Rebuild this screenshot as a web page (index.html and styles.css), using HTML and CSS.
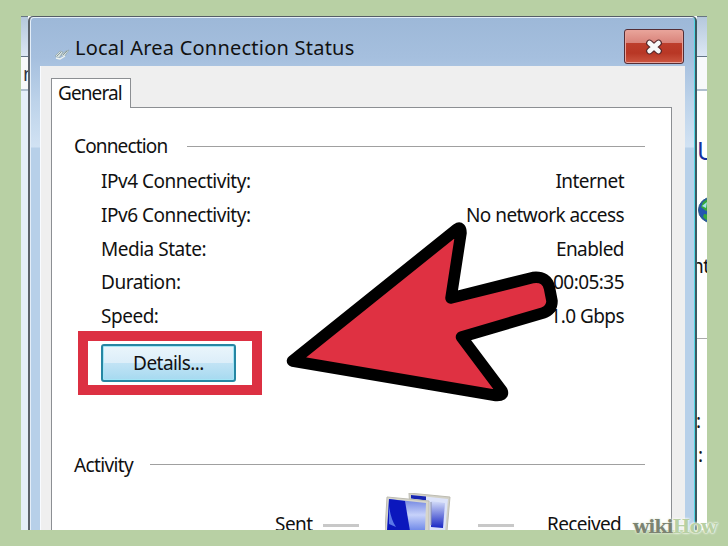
FILE: index.html
```html
<!DOCTYPE html>
<html lang="en">
<head>
<meta charset="utf-8">
<title>Local Area Connection Status</title>
<link rel="stylesheet" href="styles.css">
</head>
<body>
<main class="stage">
  <aside class="behind behind-left">
    <div class="glass"></div>
    <div class="address"><span>n</span></div>
    <div class="pane"></div>
  </aside>
  <section class="dialog">
    <header class="titlebar">
      <svg class="net-icon" width="16" height="12" viewBox="0 0 16 12"><path d="M1 8l5-5 3 1-4 6zM7 7l5-4 3-1-5 7z" fill="#d8e2df" stroke="#8fa4ab" stroke-width=".7"/><path d="M2 10l4 1 5-3" fill="none" stroke="#eef4f2" stroke-width="1.3"/><path d="M3 8l4-4M9 7l4-4" stroke="#74878c" stroke-width=".8"/></svg>
      <h1>Local Area Connection Status</h1>
      <button class="close" aria-label="Close"><svg width="20" height="18" viewBox="0 0 20 18"><path d="M5.500 5l9 8M14.500 5l-9 8" stroke="#55282b" stroke-width="6.800" stroke-linecap="round"/><path d="M5.500 5l9 8M14.500 5l-9 8" stroke="#f8f8f8" stroke-width="4.600" stroke-linecap="round"/></svg></button>
    </header>
    <div class="body">
      <div class="tabs"><div class="tab">General</div></div>
      <div class="panel">
        <h2 class="group connection"><span>Connection</span><i></i></h2>
        <dl>
          <div><dt>IPv4 Connectivity:</dt><dd>Internet</dd></div>
          <div><dt>IPv6 Connectivity:</dt><dd>No network access</dd></div>
          <div><dt>Media State:</dt><dd>Enabled</dd></div>
          <div><dt>Duration:</dt><dd>00:05:35</dd></div>
          <div><dt>Speed:</dt><dd>1.0 Gbps</dd></div>
        </dl>
        <div class="highlight"><button class="details">Details...</button></div>
        <h2 class="group activity"><span>Activity</span><i></i></h2>
        <div class="traffic">
          <span class="sent">Sent</span><i></i>
          <svg class="monitors" width="68" height="38" viewBox="0 0 68 38">
            <defs>
              <linearGradient id="screen" x2="0" y2="1"><stop stop-color="#6f83e0"/><stop offset=".5" stop-color="#c7d2fa"/><stop offset="1" stop-color="#6c86e8"/></linearGradient>
              <linearGradient id="rear" x2="0" y2="1"><stop stop-color="#d5def9"/><stop offset="1" stop-color="#1826c4"/></linearGradient>
            </defs>
            <path d="M24 0l41 4-3 34H26z" fill="#d2d1c7" stroke="#bdbcb2"/>
            <path d="M26 2l37 4-3 32H28z" fill="#dce3fa"/>
            <path d="M26 2l15 1.500v4l-15-2z" fill="#1726b2"/>
            <path d="M46 8l14 2-2 25-12-1z" fill="url(#rear)"/>
            <path d="M46 9v23" stroke="#8d92a8"/>
            <path d="M2 4l42 4v30H0z" fill="#d7d6cb" stroke="#bdbcb2"/>
            <path d="M4 6l37 4-1 28H2z" fill="url(#screen)"/>
            <path d="M4 6l16 2 5 30H2z" fill="#0b17bd"/>
            <path d="M4 13q2 14 7 21l-7-3z" fill="#5b78e8"/>
          </svg>
          <i></i><span class="received">Received</span>
        </div>
      </div>
    </div>
  </section>
  <aside class="behind behind-right">
    <div class="glass"></div>
    <div class="address"></div>
    <div class="pane">
      <span class="blue">U</span>
      <svg class="globe" width="26" height="26" viewBox="0 0 26 26"><circle cx="13" cy="13" r="12.500" fill="#2456b0" stroke="#315f86"/><path d="M5 5q5-4 8-4v10l-5 3-5-4zM6 17l7 1v7q-6-2-8-5z" fill="#37a83c"/><path d="M4 9l5-4-1 6z" fill="#a4e3ec"/></svg>
      <span class="nt">nt</span>
      <hr>
      <span class="colon one">:</span>
      <span class="colon two">:</span>
    </div>
  </aside>
</main>
<svg class="arrow" width="728" height="546" viewBox="0 0 728 546"><path d="M292.500 361L457 229Q461 226 461 233L451 298L533 277.500Q547 276 549.500 288L552 301Q552 310 543 313L461.500 337L502 391Q504 396 496 395.500Z" fill="#df3142" stroke="#000" stroke-width="11.500" stroke-linejoin="round"/></svg>
<div class="watermark"><span>wiki</span><b>How</b></div>
</body>
</html>
```

FILE: styles.css
```css
* { box-sizing: border-box; }
body {
  margin: 0;
  width: 728px;
  height: 546px;
  overflow: hidden;
  padding: 16px 21px;
  background: #b8d0a4;
  color: #111;
  font: 19px/24px "Noto Sans", sans-serif;
  letter-spacing: -.55px;
}
h1, h2, dl, dd { margin: 0; font: inherit; }
button { font: inherit; letter-spacing: inherit; color: inherit; padding: 0; }
.stage {
  display: flex;
  width: 686px;
  height: 514px;
  overflow: hidden;
  background: #fff;
}
.behind { overflow: hidden; border-top: 1px solid #687681; flex: none; }
.behind-left { width: 7px; }
.behind-right { width: 10px; }
.glass { height: 39px; background: linear-gradient(#b5c8dc, #dce7f4); }
.address { height: 35px; border-top: 1px solid #647587; border-bottom: 2px solid #afbfce; background: #f7f9fb; overflow: hidden; }
.address span { display: block; margin: 5px 0 0 2px; color: #334; }
.behind-left .pane { height: 440px; background: #e5eff9; }
.dialog {
  width: 669px;
  flex: none;
  border: 1px solid #555d66;
  border-left: 2px solid #5b626b;
  border-right: 2px solid #3b5a62;
  border-bottom: 0;
  border-radius: 5px 5px 0 0;
  background: linear-gradient(#9db8d8 0, #a5bfde 40px, #bdd3ea 85px, #d1e2f3 130px, #b7d0e9 131px, #b7d0e9);
  box-shadow: inset 1px 1px #e4eef8, inset -1px 0 #51d7e4;
  padding: 0 11px 0 10px;
}
.titlebar { display: flex; height: 49px; align-items: flex-start; }
.net-icon { margin: 31px 5px 0 14px; }
h1 { margin-top: 19px; font-size: 20px; letter-spacing: .23px; }
.close {
  width: 60px;
  height: 35px;
  margin: 12px 0 0 auto;
  display: grid;
  place-items: center;
  border: 1px solid #542e36;
  border-radius: 3px;
  background: linear-gradient(#e9a59b, #d9837a 39%, #bd3e2c 40%, #b83725 70%, #cc5641);
  box-shadow: inset 0 0 0 1px #e8a29a;
}
.body { width: 645px; height: 465px; padding: 12px 13px 0 10px; background: #efefef; border-left: 1px solid #f8fbff; }
.tabs { height: 29px; }
.tab { width: 80px; height: 30px; position: relative; z-index: 1; padding: 2px 0 0 6px; border: 1px solid #8c8f93; border-bottom: 0; background: #fff; letter-spacing: -.9px; }
.panel { height: 424px; border: 1px solid #8c8f93; border-bottom: 0; background: #fff; padding: 26px 26px 0 22px; }
.group { display: flex; align-items: center; height: 24px; letter-spacing: -.85px; }
.group i { height: 1px; flex: 1; background: #a0a0a0; margin-left: 20px; }
.activity i { margin-left: 17px; }
dl { margin: 11px 21px 0 27px; }
dl div { display: flex; justify-content: space-between; height: 33.800px; }
dt { letter-spacing: -.48px; }
.highlight { width: 184px; height: 64px; margin: -7px 0 0 4px; padding: 3px 0 0 13px; border: 10px solid #dc3042; }
.details { width: 135px; height: 38px; border: 2px solid #2686a3; border-radius: 3px; background: linear-gradient(#eaf5fb, #dceef9 49%, #c2e3f5 50%, #a6daf0); box-shadow: inset 0 0 0 1px #a4e5f6; }
.activity { margin-top: 58px; letter-spacing: -.65px; }
.traffic { display: flex; height: 50px; margin: 15px 0 0 201px; }
.traffic span { margin-top: 20px; }
.traffic i { width: 36px; height: 3px; margin-top: 32px; background: #c8c8c8; }
.traffic .sent { width: 48px; }
.monitors { margin: 1px 25px 0 26px; }
.traffic .received { margin-left: 33px; letter-spacing: -.65px; }
.behind-right .pane { padding-top: 47px; }
.behind-right .pane span { display: block; height: 24px; }
.blue { color: #132f9e; font-size: 25px; }
.globe { display: block; margin: 35px 0 0 1px; }
.nt { margin: 31px 0 0 -5px; }
hr { border: 0; border-top: 1px solid #aaa; margin: 60px 0 0; }
.behind-right .one { margin: 70px 0 0 -1px; }
.behind-right .two { margin: 10px 0 0 1px; }
.arrow { position: absolute; top: 0; left: 0; }
.watermark { position: absolute; left: 633px; top: 514px; font: bold 19px/24px "DejaVu Serif", serif; color: #7b8372; letter-spacing: -1.100px; text-shadow: 0 0 2px #e4ecdc, 0 0 3px #e4ecdc; }
.watermark b { color: #b8d0a4; text-shadow: 0 0 1px #eef5e7, 0 0 2px #fff, 0 0 3px #fff; }
```
